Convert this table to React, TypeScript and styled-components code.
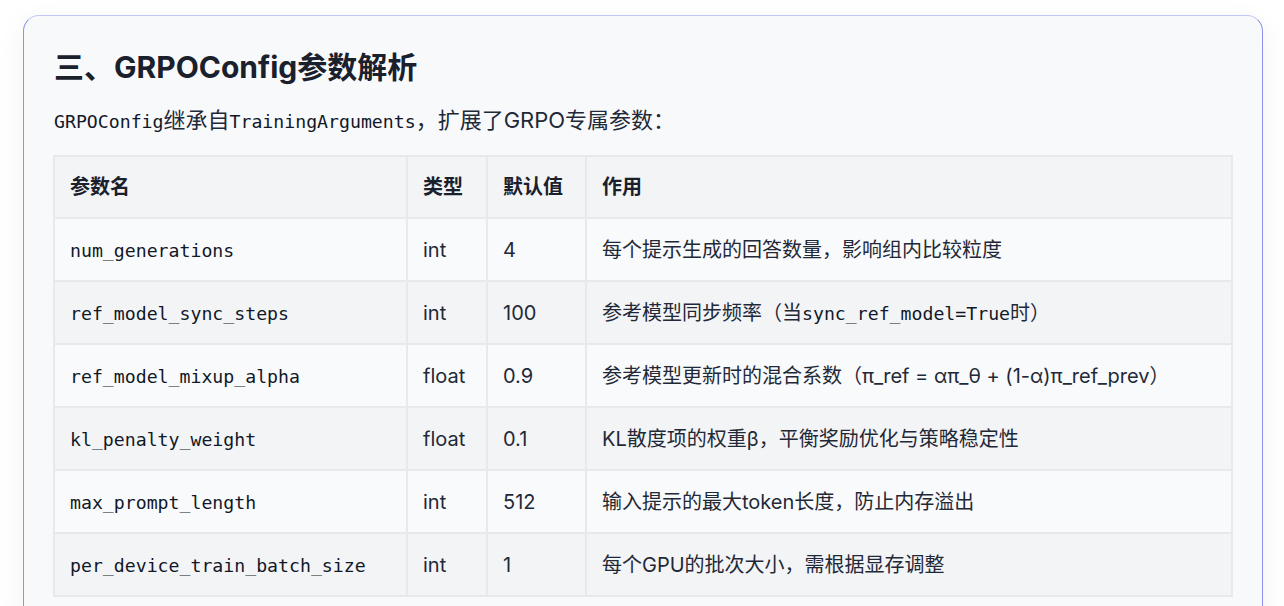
import React from "react";
import styled, { createGlobalStyle } from "styled-components";

const GlobalStyle = createGlobalStyle`
  html, body {
    margin: 0;
    padding: 0;
    background: #ffffff;
  }
  body {
    font-family: "Inter", "Noto Sans CJK SC", sans-serif;
    color: #1f2937;
  }
`;

const Page = styled.div`
  padding: 15px 21px 40px 23px;
`;

const Card = styled.section`
  background: #f8f9fb;
  border: 1px solid #8c93e8;
  border-top-color: #c2c6f2;
  border-radius: 16px;
  padding: 29px 29px 30px 29px;
  box-shadow: 0 8px 30px rgba(0, 0, 0, 0.06);
`;

const Heading = styled.h2`
  margin: 0 0 15px 1px;
  font-family: "Inter", "Noto Sans CJK SC", sans-serif;
  font-size: 30px;
  line-height: 45px;
  font-weight: 700;
  color: #1a202c;
`;

const Lead = styled.p`
  margin: 0 0 20px 1px;
  font-size: 22px;
  line-height: 30px;
  color: #1f2937;
`;

const Code = styled.code`
  font-family: "DejaVu Sans Mono", "Noto Sans CJK SC", monospace;
  font-size: 18.2px;
  line-height: 1;
  color: #111827;
`;

const Table = styled.table`
  width: 100%;
  border-collapse: collapse;
  table-layout: fixed;
  font-size: 20px;
  line-height: 30px;
`;

const Row = styled.tr<{ $alt: boolean }>`
  background: ${(p) => (p.$alt ? "#f3f4f6" : "#f9fafb")};
`;

const HeadCell = styled.th`
  border: 2px solid #e8e9ec;
  padding: 15px 15px;
  text-align: left;
  font-weight: 700;
  color: #1a202c;
  background: #f3f4f6;
`;

const Cell = styled.td`
  border: 2px solid #e8e9ec;
  padding: 15.5px 15px;
  text-align: left;
  font-weight: 400;
  color: #1f2937;
  white-space: nowrap;
`;

type Param = {
  name: string;
  type: string;
  def: string;
  desc: React.ReactNode;
};

const params: Param[] = [
  { name: "num_generations", type: "int", def: "4", desc: "每个提示生成的回答数量，影响组内比较粒度" },
  {
    name: "ref_model_sync_steps",
    type: "int",
    def: "100",
    desc: (
      <>
        参考模型同步频率（当<Code>sync_ref_model=True</Code>时）
      </>
    ),
  },
  {
    name: "ref_model_mixup_alpha",
    type: "float",
    def: "0.9",
    desc: "参考模型更新时的混合系数（π_ref = απ_θ + (1-α)π_ref_prev）",
  },
  { name: "kl_penalty_weight", type: "float", def: "0.1", desc: "KL散度项的权重β，平衡奖励优化与策略稳定性" },
  { name: "max_prompt_length", type: "int", def: "512", desc: "输入提示的最大token长度，防止内存溢出" },
  { name: "per_device_train_batch_size", type: "int", def: "1", desc: "每个GPU的批次大小，需根据显存调整" },
];

export default function App() {
  return (
    <>
      <GlobalStyle />
      <Page>
        <Card>
          <Heading>三、GRPOConfig参数解析</Heading>
          <Lead>
            <Code>GRPOConfig</Code>继承自<Code>TrainingArguments</Code>，扩展了GRPO专属参数：
          </Lead>
          <Table>
            <colgroup>
              <col style={{ width: 353 }} />
              <col style={{ width: 80 }} />
              <col style={{ width: 99 }} />
              <col />
            </colgroup>
            <thead>
              <tr>
                <HeadCell>参数名</HeadCell>
                <HeadCell>类型</HeadCell>
                <HeadCell>默认值</HeadCell>
                <HeadCell>作用</HeadCell>
              </tr>
            </thead>
            <tbody>
              {params.map((p, i) => (
                <Row key={p.name} $alt={i % 2 === 1}>
                  <Cell>
                    <Code>{p.name}</Code>
                  </Cell>
                  <Cell>{p.type}</Cell>
                  <Cell>{p.def}</Cell>
                  <Cell>{p.desc}</Cell>
                </Row>
              ))}
            </tbody>
          </Table>
        </Card>
      </Page>
    </>
  );
}
